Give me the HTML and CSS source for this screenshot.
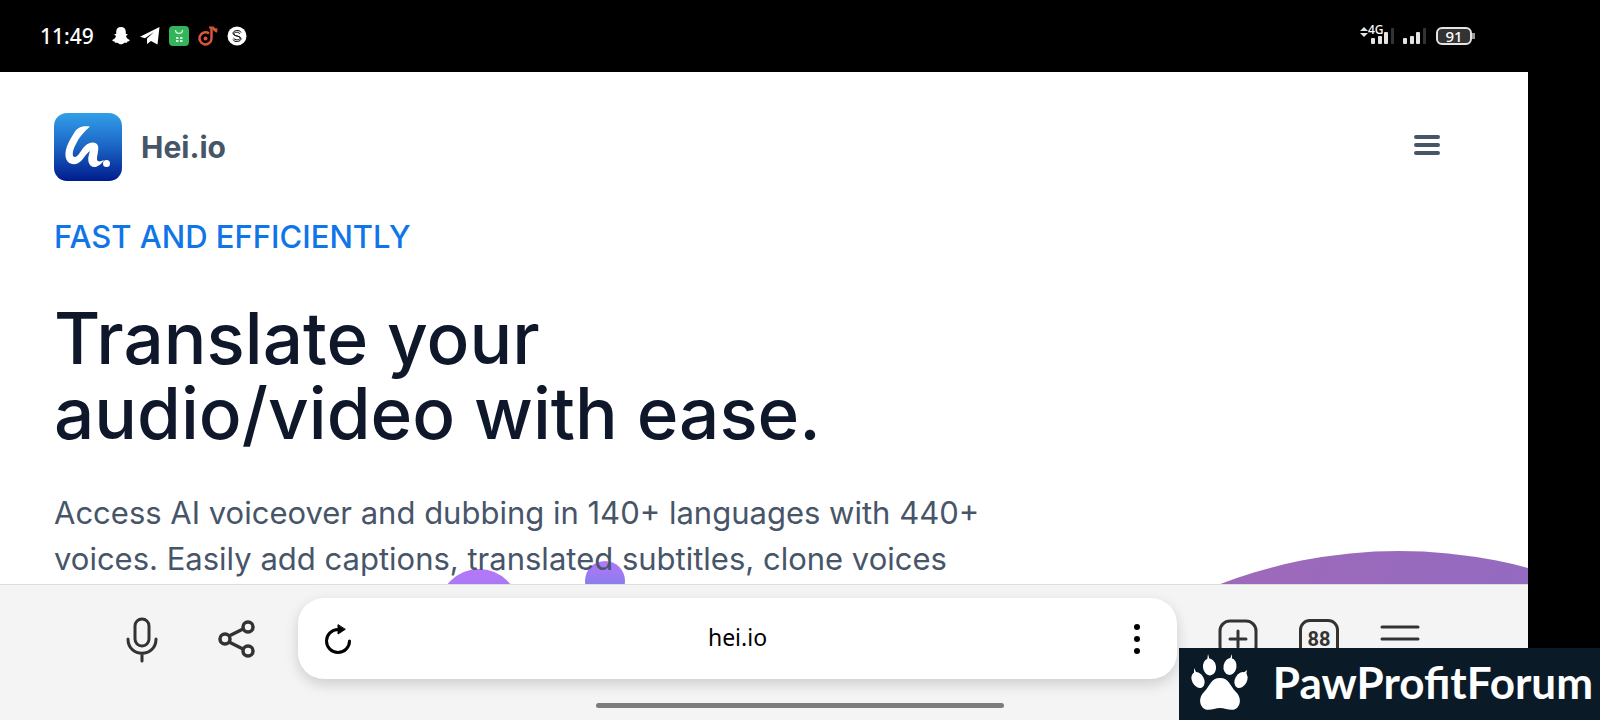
FILE: index.html
```html
<!DOCTYPE html>
<html lang="en">
<head>
    <meta charset="UTF-8">
    <meta name="viewport" content="width=device-width, initial-scale=1.0">
    <title>Hei.io</title>
    <link rel="stylesheet" href="styles.css">
</head>
<body>
    <div class="status-bar">
        <div class="status-left">
            <span class="clock">11:49</span>
            <svg width="20" height="20" viewBox="0 0 20 20" fill="#fff"><path d="M10 1c3 0 4.800 2 4.800 4.800v2.200c.6.300 1.400-.3 1.700.3.300.8-1 1.200-1.500 1.700.4 2 1.900 3.300 3.700 3.900.4.900-1.300 1.400-2.300 1.600-.2.500-.2 1-.6 1.200-.9.100-1.800-.3-2.700.2-1 .7-1.800 1.300-3.100 1.300s-2.100-.6-3.100-1.300c-.9-.5-1.800-.1-2.700-.2-.4-.2-.4-.7-.6-1.200-1-.2-2.700-.7-2.300-1.600 1.800-.6 3.300-1.900 3.700-3.900-.5-.5-1.800-.9-1.500-1.700.3-.6 1.100 0 1.700-.3V5.800C5.200 3 7 1 10 1z"/></svg>
            <svg width="20" height="20" viewBox="0 0 20 20" fill="#fff"><path d="M0 10.700 19.500 1l-2 17.500-6.500-3.500-4 3v-5.500L14 6 5 12.300z"/></svg>
            <svg width="20" height="20" viewBox="0 0 20 20" fill="none"><rect width="20" height="20" rx="4" fill="#34b45b"/><path d="M6.500 4c0 4.500 7 4.500 7 0" stroke="#d4f5dc" stroke-width="1.300"/><path d="M7 12h2.500M11 12h2.500M7 15h2.500M11 15h2.500" stroke="#d4f5dc" stroke-width="2"/></svg>
            <svg width="20" height="20" viewBox="0 0 20 20" fill="none" stroke="#d9563a"><path d="M11 7.500A6 6 0 1 0 13.500 12.500V1.500" stroke-width="2.500"/><circle cx="7.500" cy="12.500" r="1" stroke-width="2"/><path d="M11 1.500h4c1 1.500 3 2 4.500 2M15 3l4 3" stroke-width="2"/></svg>
            <svg width="20" height="20" viewBox="0 0 20 20" fill="none" stroke="#000"><circle cx="10" cy="10" r="9.500" fill="#fff" stroke="none"/><path d="M14 6.500c-1-3-8-2.500-8 .8 0 3.200 7 2 7 5 0 2-5.500 2-6.500-.3M6 13.500c1 3 8 2.500 8-.8 0-3.200-7-2-7-5 0-2 5-2 6 .3" stroke-width="1"/></svg>
        </div>
        <div class="status-right">
            <span class="network">
                <svg width="38" height="24" viewBox="0 0 38 24" fill="#e4e4e4"><path d="M0 7 4 3l4 4zM0 9l4 4 4-4z"/><rect x="11" y="14" width="4" height="6" rx="1"/><rect x="18" y="12" width="4" height="8" rx="1"/><rect x="24" y="8" width="4" height="12" rx="1"/><rect x="31" y="4" width="3" height="16" rx="1" fill="#333"/></svg>
                <span class="network-type">4G</span>
            </span>
            <svg width="26" height="24" viewBox="0 0 26 24" fill="#e4e4e4"><rect x="1" y="14" width="4" height="6" rx="1"/><rect x="8" y="12" width="4" height="8" rx="1"/><rect x="14" y="8" width="4" height="12" rx="1"/><rect x="21" y="4" width="3" height="16" rx="1" fill="#333"/></svg>
            <span class="battery">91</span>
        </div>
    </div>

    <main class="page">
        <header class="site-header">
            <a class="brand" href="#">
                <svg width="68" height="68" viewBox="0 0 68 68" fill="none">
                    <defs>
                        <linearGradient id="logo" x1="0" y1="0" x2="0" y2="1">
                            <stop offset="0" stop-color="#329fe8"/>
                            <stop offset="0.500" stop-color="#1b64c4"/>
                            <stop offset="1" stop-color="#001c8c"/>
                        </linearGradient>
                    </defs>
                    <rect width="68" height="68" rx="13" fill="url(#logo)"/>
                    <path d="M36 13.500c-6-1-12 0-15 5-5 8-10 16-9.500 24C12 52 22 54 28 47c3-4 5-7 8-9-2 6-3 11 1 15 4 3 10-1 13-6-4 2-7 2-7-1 0-4 2-9 1-13-2-5-9-4-13 0-5 5-6 10-10 11-4 0-2-8 1-13 3-7 8-12 14-17.500z" fill="#fff"/>
                    <circle cx="52.500" cy="50.500" r="3.500" fill="#fff"/>
                </svg>
                <span>Hei.io</span>
            </a>
            <button class="menu-button" aria-label="Open menu">
                <svg width="26" height="20" viewBox="0 0 26 20" stroke="#475569" stroke-width="4" stroke-linecap="round"><path d="M2 2h22M2 10h22M2 18h22"/></svg>
            </button>
        </header>
        <section class="hero">
            <p class="eyebrow">FAST AND EFFICIENTLY</p>
            <h1>Translate your audio/video with ease.</h1>
            <p class="lead">Access AI voiceover and dubbing in 140+ languages with 440+ voices. Easily add captions, translated subtitles, clone voices</p>
        </section>
        <span class="bubble bubble-medium"></span>
        <span class="bubble bubble-small"></span>
        <span class="bubble bubble-large"></span>
    </main>

    <footer class="browser-bar">
        <nav class="tools">
            <div class="tool-group">
                <button aria-label="Voice search">
                    <svg width="40" height="48" viewBox="0 0 40 48" fill="none" stroke="#333" stroke-width="3" stroke-linecap="round"><rect x="13" y="4" width="14" height="27" rx="7"/><path d="M6 24c0 19 28 19 28 0M20 39v7"/></svg>
                </button>
                <button aria-label="Share">
                    <svg width="40" height="48" viewBox="0 0 40 48" fill="none" stroke="#333" stroke-width="3.500"><circle cx="8" cy="24" r="5"/><circle cx="31" cy="12" r="5"/><circle cx="31" cy="36" r="5"/><path d="m12 21 14-7M12 27l14 7"/></svg>
                </button>
            </div>
            <div class="address">
                <button aria-label="Reload">
                    <svg width="30" height="32" viewBox="0 0 30 32" fill="none" stroke="#000" stroke-width="3" stroke-linecap="round"><path d="M15 6.500A11.500 11.500 0 1 0 26.500 18"/><path d="M15 2v9l7-4.500z" fill="#000" stroke-width="1"/></svg>
                </button>
                <input type="text" value="hei.io" aria-label="Address">
                <button aria-label="Page options">
                    <svg width="30" height="32" viewBox="0 0 30 32"><circle cx="15" cy="4" r="3"/><circle cx="15" cy="16" r="3"/><circle cx="15" cy="28" r="3"/></svg>
                </button>
            </div>
            <div class="tool-group">
                <button aria-label="New tab">
                    <svg width="40" height="40" viewBox="0 0 40 40" fill="none" stroke="#333" stroke-width="3" stroke-linecap="round"><rect x="2" y="2" width="36" height="36" rx="10"/><path d="M20 12v16M12 20h16"/></svg>
                </button>
                <button class="tabs" aria-label="Open tabs">88</button>
                <button aria-label="Browser menu">
                    <svg width="40" height="40" viewBox="0 0 40 40" stroke="#333" stroke-width="3" stroke-linecap="round"><path d="M2 8h36M2 20h36"/></svg>
                </button>
            </div>
        </nav>
        <div class="home-indicator"></div>
    </footer>

    <div class="watermark">
        <svg width="58" height="56" viewBox="0 0 58 56" fill="#fff">
            <path d="M29 24c-9 0-10 8-16 14-5 5-5 12-1 16 5 4 11 0 17 0s12 4 17 0c4-4 4-11-1-16-6-6-7-14-16-14z"/>
            <ellipse cx="18.500" cy="13" rx="6.500" ry="8.500" transform="rotate(-10 18.500 13)"/>
            <ellipse cx="39" cy="12.500" rx="6.500" ry="8.500" transform="rotate(10 39 12.500)"/>
            <ellipse cx="7" cy="26" rx="6" ry="8.500" transform="rotate(-28 7 26)"/>
            <ellipse cx="50" cy="26" rx="6" ry="8.500" transform="rotate(28 50 26)"/>
            <path d="m16 7 1-7 2 7zM38 7l3-7v7zM3 20l0-6 3 6zM51 20l5-4-1 6z"/>
        </svg>
        <span>PawProfitForum</span>
    </div>
</body>
</html>
```
FILE: styles.css
```css
* {
    box-sizing: border-box;
}
body {
    margin: 0;
    height: 100vh;
    padding-right: 72px;
    display: flex;
    flex-direction: column;
    background-color: #000;
    font-family: Inter, sans-serif;
    overflow: hidden;
}
h1, p {
    margin: 0;
}
button {
    display: flex;
    align-items: center;
    justify-content: center;
    padding: 0;
    border: none;
    background: none;
    cursor: pointer;
}
svg {
    display: block;
}

/* Phone status bar */
.status-bar {
    flex: none;
    height: 72px;
    padding: 0 56px 0 40px;
    display: flex;
    justify-content: space-between;
    align-items: center;
    color: #fff;
    font-family: "Noto Sans", sans-serif;
}
.status-left {
    display: flex;
    align-items: center;
    gap: 9px;
}
.clock {
    font-size: 21px;
    font-weight: 500;
    margin-right: 8px;
}
.status-right {
    display: flex;
    align-items: center;
    gap: 8px;
}
.network {
    position: relative;
    margin-right: -4px;
}
.network-type {
    position: absolute;
    top: 0;
    left: 8px;
    font-size: 12px;
    line-height: 12px;
    font-weight: 500;
}
.battery {
    position: relative;
    width: 36px;
    height: 18px;
    border: 2px solid #e4e4e4;
    border-radius: 6px;
    background-color: #333;
    font-size: 15px;
    line-height: 14px;
    font-weight: 500;
    text-align: center;
}
.battery::after {
    content: "";
    position: absolute;
    right: -5px;
    top: 4px;
    width: 3px;
    height: 6px;
    background-color: #999;
}

/* Web page */
.page {
    flex: 1;
    min-height: 0;
    position: relative;
    overflow: hidden;
    padding: 41px 88px 0 54px;
    background-color: #fff;
}
.site-header {
    display: flex;
    justify-content: space-between;
    align-items: center;
}
.menu-button {
    margin-bottom: 5px;
}
.brand {
    display: flex;
    align-items: center;
    gap: 19px;
    color: #475569;
    font-size: 30px;
    font-weight: 700;
    text-decoration: none;
}
.hero {
    position: relative;
    z-index: 1;
}
.eyebrow {
    margin-top: 34px;
    color: #0f75e8;
    font-size: 31px;
    line-height: 44px;
    font-weight: 500;
}
h1 {
    max-width: 860px;
    margin-top: 42px;
    color: #0f172a;
    font-size: 71px;
    line-height: 75px;
    font-weight: 500;
}
.lead {
    max-width: 960px;
    margin-top: 39px;
    color: #475569;
    font-size: 31px;
    line-height: 46px;
}
.bubble {
    position: absolute;
    border-radius: 50%;
}
.bubble-medium {
    left: 439px;
    top: 497px;
    width: 80px;
    height: 80px;
    background: linear-gradient(#b577f8, #7a80e8);
}
.bubble-small {
    left: 585px;
    top: 489px;
    width: 40px;
    height: 40px;
    background: linear-gradient(#b577f8, #6a82e4);
}
.bubble-large {
    right: -371px;
    top: 479px;
    width: 1000px;
    height: 1000px;
    background: linear-gradient(115deg, #a368b8 15%, #8a6cc4 60%);
}

/* Browser toolbar */
.browser-bar {
    flex: none;
    height: 136px;
    padding-top: 13px;
    border-top: 1px solid #ddd;
    background-color: #f4f4f4;
}
.tools {
    display: flex;
    align-items: center;
    padding: 0 108px 0 122px;
    gap: 41px;
}
.tool-group {
    display: flex;
    gap: 55px;
}
.tool-group:last-child {
    gap: 41px;
}
.address {
    flex: 1;
    display: flex;
    align-items: center;
    height: 81px;
    padding: 0 25px;
    border-radius: 26px;
    background-color: #fff;
    box-shadow: 0 5px 14px rgba(0,0,0,0.16);
}
.address input {
    flex: 1;
    min-width: 0;
    padding: 0 0 4px;
    border: none;
    outline: none;
    background: none;
    color: #000;
    font-family: "Noto Sans", sans-serif;
    font-size: 23px;
    text-align: center;
}
.tabs {
    width: 40px;
    height: 40px;
    border: 3px solid #333;
    border-radius: 11px;
    color: #333;
    font-family: Roboto, sans-serif;
    font-size: 20px;
    font-weight: 700;
}
.home-indicator {
    width: 408px;
    height: 5px;
    margin: 24px auto 0;
    border-radius: 3px;
    background-color: #7c7c7c;
    position: relative;
    left: 36px;
}

.watermark {
    position: absolute;
    right: 0;
    bottom: 0;
    height: 72px;
    padding: 0 7px 4px 12px;
    display: flex;
    align-items: center;
    gap: 24px;
    background-color: #0b1a27;
    color: #fff;
    font-family: Lato, sans-serif;
    font-size: 44px;
    font-weight: 700;
}
```
